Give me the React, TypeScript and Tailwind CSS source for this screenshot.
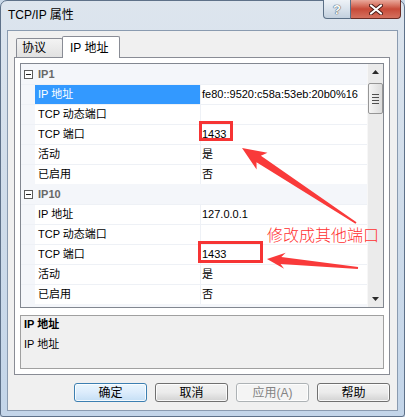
import React from 'react';

type Row = { name: string; value: string; selected?: boolean };
type Group = { name: string; rows: Row[] };

const groups: Group[] = [
  {
    name: 'IP1',
    rows: [
      { name: 'IP 地址', value: 'fe80::9520:c58a:53eb:20b0%16', selected: true },
      { name: 'TCP 动态端口', value: '' },
      { name: 'TCP 端口', value: '1433' },
      { name: '活动', value: '是' },
      { name: '已启用', value: '否' },
    ],
  },
  {
    name: 'IP10',
    rows: [
      { name: 'IP 地址', value: '127.0.0.1' },
      { name: 'TCP 动态端口', value: '' },
      { name: 'TCP 端口', value: '1433' },
      { name: '活动', value: '是' },
      { name: '已启用', value: '否' },
    ],
  },
  // next group, scrolled out of view: only the top of its box shows
  { name: '', rows: [] },
];

// tapered arrow polygon, tip <- tail
function arrowPoints(tx: number, ty: number, sx: number, sy: number, headLen: number, headHalf: number, neck: number, tailHalf: number) {
  const dx = tx - sx;
  const dy = ty - sy;
  const len = Math.hypot(dx, dy);
  const ux = dx / len;
  const uy = dy / len;
  const px = -uy;
  const py = ux;
  const bx = tx - ux * headLen;
  const by = ty - uy * headLen;
  const nx = bx + ux * 4;
  const ny = by + uy * 4;
  const pts = [
    [sx + px * tailHalf, sy + py * tailHalf],
    [nx + px * neck, ny + py * neck],
    [bx + px * headHalf, by + py * headHalf],
    [tx, ty],
    [bx - px * headHalf, by - py * headHalf],
    [nx - px * neck, ny - py * neck],
    [sx - px * tailHalf, sy - py * tailHalf],
  ];
  return pts.map((p) => p.map((v) => v.toFixed(1)).join(',')).join(' ');
}

function CategoryRow({ name }: { name: string }) {
  return (
    <div className="flex h-[20px] shrink-0 items-center border-t border-[#f4f6fa] bg-[#f4f6fa]">
      <div className="w-[14px] h-full flex items-center pl-[3px]">
        <div className="w-[9px] h-[9px] border border-[#5c5c5c] bg-white flex items-center justify-center">
          <div className="w-[5px] h-[1px] bg-[#222]" />
        </div>
      </div>
      {name && <span className="pl-[3px] font-bold text-[#686868]">{name}</span>}
    </div>
  );
}

function PropRow({ row }: { row: Row }) {
  return (
    <div className="flex h-[20px] shrink-0 border-t border-[#eef1f6]">
      <div className="w-[14px] bg-[#f4f6fa]" />
      <div
        className={`w-[166px] border-r border-[#eef1f6] pl-[3px] flex items-center ${
          row.selected ? 'bg-[#3399ff] text-white' : 'bg-white'
        }`}
      >
        {row.name}
      </div>
      <div className="flex-1 pl-[1px] flex items-center bg-white whitespace-nowrap">{row.value}</div>
    </div>
  );
}

function Scrollbar() {
  return (
    <div className="w-[16px] flex flex-col bg-[#ebebeb] border-l border-[#f7f7f7]">
      <div className="h-[16px] flex items-center justify-center">
        <svg width="7" height="4" viewBox="0 0 7 4">
          <path d="M3.5 0 L7 4 L0 4 Z" fill="#2a2a2a" />
        </svg>
      </div>
      <div className="mt-[3px] h-[31px] rounded-[2px] border border-[#969696] bg-gradient-to-r from-[#f5f5f5] to-[#dcdcdc] flex flex-col items-center justify-center gap-[2px]">
        <div className="w-[7px] h-[1px] bg-[#4f4f4f]" />
        <div className="w-[7px] h-[1px] bg-[#4f4f4f]" />
        <div className="w-[7px] h-[1px] bg-[#4f4f4f]" />
        <div className="w-[7px] h-[1px] bg-[#4f4f4f]" />
      </div>
      <div className="flex-1" />
      <div className="h-[16px] flex items-center justify-center">
        <svg width="7" height="4" viewBox="0 0 7 4">
          <path d="M0 0 L7 0 L3.5 4 Z" fill="#2a2a2a" />
        </svg>
      </div>
    </div>
  );
}

function DlgButton({ label, primary, disabled }: { label: string; primary?: boolean; disabled?: boolean }) {
  return (
    <div
      className={`w-[73px] h-[19px] rounded-[3px] border flex items-center justify-center text-[12px] shadow-[inset_0_0_0_1px_rgba(255,255,255,0.8)] ${
        primary
          ? 'border-[#3c7fb1] bg-gradient-to-b from-[#eaf6fd] via-[#dcecfc] to-[#c5dff5]'
          : disabled
            ? 'border-[#adb2b5] bg-[#f4f4f4] text-[#838383]'
            : 'border-[#707070] bg-gradient-to-b from-[#f2f2f2] via-[#ebebeb] to-[#d2d2d2]'
      }`}
    >
      {label}
    </div>
  );
}

export default function App() {
  return (
    <div className="relative w-[405px] h-[417px] overflow-hidden font-['Liberation_Sans','Noto_Sans_CJK_SC',sans-serif] text-[11px] text-black select-none bg-[#c9d8e8]">
      <div className="flex flex-col w-full h-full border border-[#5e7189] rounded-t-[7px] rounded-b-[3px] bg-gradient-to-b from-[#dde5ee] via-[#cfdcea] to-[#c3d5e9]">
        {/* title bar */}
        <div className="h-[29px] flex justify-between pl-[7px] pr-[3px]">
          <div className="text-[12px] leading-[15px] pt-[7px]">TCP/IP 属性</div>
          <div className="flex -mt-[1px] h-[19px]">
            <div className="w-[28px] h-full rounded-bl-[4px] border border-t-0 border-[#5b6f86] bg-gradient-to-b from-[#eef2f7] via-[#d9e2ec] to-[#c3d0de] flex items-center justify-center">
              <span className="text-[13px] font-bold text-white leading-none [text-shadow:0_0_1px_#2c3a4a,0_0_1px_#2c3a4a]">?</span>
            </div>
            <div className="w-[50px] h-full rounded-br-[4px] border border-l-0 border-t-0 border-[#6a2c25] bg-gradient-to-b from-[#e9a99c] via-[#c74a38] to-[#d4705e] flex items-center justify-center">
              <svg width="14" height="11" viewBox="0 0 14 11">
                <path d="M2 1.5 L12 9.5 M12 1.5 L2 9.5" stroke="#4a1b16" strokeWidth="4" strokeLinecap="round" />
                <path d="M2 1.5 L12 9.5 M12 1.5 L2 9.5" stroke="#ffffff" strokeWidth="2.2" strokeLinecap="round" />
              </svg>
            </div>
          </div>
        </div>

        {/* client area */}
        <div className="flex-1 mx-[6px] mb-[5px] border border-[#8a9bb0] bg-[#f0f0f0] flex flex-col">
          {/* tabs */}
          <div className="mt-[5px] ml-[6px] pl-[2px] h-[21px] flex items-end text-[12px]">
            <div className="w-[47px] h-[19px] border border-b-0 border-[#898c95] rounded-t-[2px] bg-gradient-to-b from-[#f3f3f3] to-[#e1e1e1] flex items-center pl-[5px]">
              协议
            </div>
            <div className="relative z-10 -ml-[1px] -mb-[1px] w-[58px] h-[22px] border border-b-0 border-[#898c95] rounded-t-[2px] bg-white flex items-center pl-[7px]">
              IP 地址
            </div>
          </div>

          {/* tab page */}
          <div className="ml-[6px] mr-[7px] h-[318px] border border-[#898c95] bg-white p-[5px] flex flex-col">
            <div className="h-[245px] border border-[#828790] flex">
              <div className="flex-1 flex flex-col overflow-hidden">
                {groups.map((g, gi) => (
                  <React.Fragment key={gi}>
                    <CategoryRow name={g.name} />
                    {g.rows.map((r, i) => (
                      <PropRow key={i} row={r} />
                    ))}
                  </React.Fragment>
                ))}
              </div>
              <Scrollbar />
            </div>
            <div className="mt-[7px] h-[54px] border border-[#a0a0a0] bg-[#f0f0f0] pl-[3px] pt-[1px] flex flex-col gap-[5px]">
              <div className="leading-[15px] font-bold">IP 地址</div>
              <div className="leading-[15px]">IP 地址</div>
            </div>
          </div>

          {/* buttons */}
          <div className="mt-[8px] pr-[7px] flex justify-end gap-[8px]">
            <DlgButton label="确定" primary />
            <DlgButton label="取消" />
            <DlgButton label="应用(A)" disabled />
            <DlgButton label="帮助" />
          </div>
        </div>
      </div>

      {/* annotations drawn over the dialog */}
      <svg className="absolute left-0 top-0 pointer-events-none" width="405" height="417" viewBox="0 0 405 417">
        <rect x="200.5" y="122.5" width="31" height="17" fill="none" stroke="#f63434" strokeWidth="3" />
        <rect x="199.5" y="242.5" width="62" height="19" fill="none" stroke="#f63434" strokeWidth="3" />
        <polygon points={arrowPoints(242, 148, 356, 223, 24, 10, 4, 1)} fill="#f93a3a" />
        <polygon points={arrowPoints(267, 259, 358, 268, 18, 8, 3.5, 1)} fill="#f93a3a" />
      </svg>
      <div className="absolute left-[267px] top-[224px] text-[16px] leading-[20px] text-[#ff3030] font-light font-['Noto_Sans_CJK_SC',sans-serif] whitespace-nowrap">
        修改成其他端口
      </div>
    </div>
  );
}
